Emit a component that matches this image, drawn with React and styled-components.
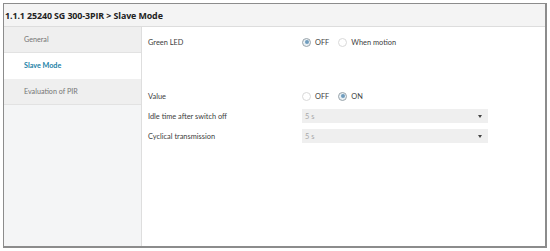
import React from "react";
import styled, { createGlobalStyle } from "styled-components";

const Global = createGlobalStyle`
  html, body { margin: 0; padding: 0; background: #ffffff; }
  body { font-family: Lato, "Open Sans", sans-serif; }
`;

const Frame = styled.div`
  margin: 3px 0 0 3px;
  width: 541px;
  height: 242px;
  border: 1px solid #8c8c8c;
  border-bottom-width: 2px;
  border-right-width: 2px;
  display: flex;
  flex-direction: column;
  background: #fff;
  overflow: hidden;
`;

const Header = styled.div`
  height: 22px;
  flex: none;
  background: #f4f4f4;
  border-bottom: 1px solid #dddddd;
  display: flex;
  align-items: center;
  padding-left: 1px;
  font-family: "Open Sans", sans-serif;
  font-size: 8.9px;
  font-weight: 700;
  color: #222;
  letter-spacing: -0.1px;
`;

const Body = styled.div`
  flex: 1;
  display: flex;
`;

const Sidebar = styled.div`
  width: 137px;
  flex: none;
  background: #f4f5f6;
  border-right: 1px solid #dedede;
  display: flex;
  flex-direction: column;
`;

const NavItem = styled.div`
  height: 25px;
  display: flex;
  align-items: center;
  padding-left: 20px;
  font-size: 7.2px;
  color: ${(p) => (p.$active ? "#1b7fa6" : "#757575")};
  font-weight: ${(p) => (p.$active ? 700 : 400)};
  background: ${(p) => (p.$active ? "#ffffff" : "#efefef")};
  border-bottom: 1px solid ${(p) => (p.$active ? "#ffffff" : "#e2e2e2")};
`;

const Content = styled.div`
  flex: 1;
  padding: 5px 0 0 6px;
  display: flex;
  flex-direction: column;
  font-size: 7.4px;
  color: #404040;
`;

const Row = styled.div`
  display: grid;
  grid-template-columns: 154px 186px;
  height: 20px;
  align-items: center;
  margin-top: ${(p) => p.$gap || 0}px;
`;

const Label = styled.div``;

const Control = styled.div`
  display: flex;
  align-items: center;
`;

const RadioOpt = styled.span`
  display: inline-flex;
  align-items: center;
  margin-right: 9px;
`;

const Circle = styled.span`
  width: 9px;
  height: 9px;
  box-sizing: border-box;
  border-radius: 50%;
  margin-right: 4px;
  border: 1px solid ${(p) => (p.$on ? "#9aa4ab" : "#d9d9d9")};
  background: ${(p) => (p.$on ? "#e9f0f4" : "#ffffff")};
  display: inline-flex;
  align-items: center;
  justify-content: center;
  &::after {
    content: "";
    display: ${(p) => (p.$on ? "block" : "none")};
    width: 4px;
    height: 4px;
    border-radius: 50%;
    background: #6f9cbd;
  }
`;

const Select = styled.div`
  width: 186px;
  height: 14px;
  box-sizing: border-box;
  background: #efefef;
  display: flex;
  align-items: center;
  justify-content: space-between;
  padding: 0 6px 0 3px;
  color: #a8a8a8;
`;

const Arrow = styled.span`
  width: 0;
  height: 0;
  border-left: 2.5px solid transparent;
  border-right: 2.5px solid transparent;
  border-top: 3px solid #444;
`;

const Radio = ({ on, children }) => (
  <RadioOpt>
    <Circle $on={on} />
    {children}
  </RadioOpt>
);

export default function App() {
  return (
    <>
      <Global />
      <Frame>
        <Header>1.1.1 25240 SG 300-3PIR &gt; Slave Mode</Header>
        <Body>
          <Sidebar>
            <NavItem>General</NavItem>
            <NavItem $active>Slave Mode</NavItem>
            <NavItem>Evaluation of PIR</NavItem>
          </Sidebar>
          <Content>
            <Row>
              <Label>Green LED</Label>
              <Control>
                <Radio on>OFF</Radio>
                <Radio>When motion</Radio>
              </Control>
            </Row>
            <Row $gap={34}>
              <Label>Value</Label>
              <Control>
                <Radio>OFF</Radio>
                <Radio on>ON</Radio>
              </Control>
            </Row>
            <Row>
              <Label>Idle time after switch off</Label>
              <Control>
                <Select>
                  <span>5 s</span>
                  <Arrow />
                </Select>
              </Control>
            </Row>
            <Row>
              <Label>Cyclical transmission</Label>
              <Control>
                <Select>
                  <span>5 s</span>
                  <Arrow />
                </Select>
              </Control>
            </Row>
          </Content>
        </Body>
      </Frame>
    </>
  );
}
